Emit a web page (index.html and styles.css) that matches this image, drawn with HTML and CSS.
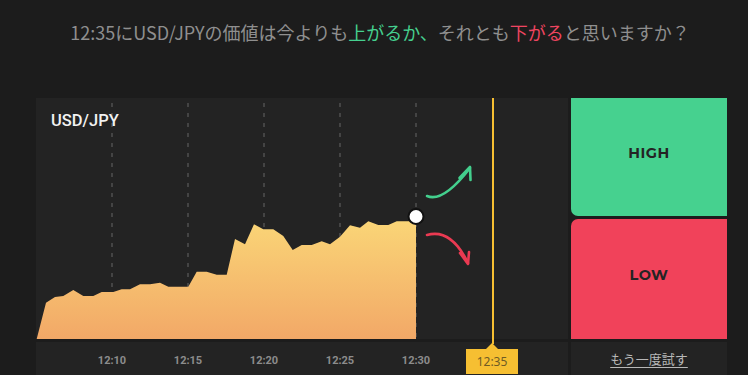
FILE: index.html
```html
<!DOCTYPE html>
<html lang="ja">
<head>
<meta charset="utf-8">
<link rel="stylesheet" href="styles.css">
</head>
<body>
<header class="question">
  <p>12:35にUSD/JPYの価値は今よりも<span class="up">上がるか、</span>それとも<span class="down">下がる</span>と思いますか？</p>
</header>
<main class="board">
  <section class="chart">
    <h2 class="pair">USD/JPY</h2>
    <svg class="plot" width="532" height="241" viewBox="0 0 532 241">
      <defs>
        <linearGradient id="fill" x1="0" y1="0" x2="0" y2="1">
          <stop offset="0" stop-color="#fad677"/>
          <stop offset="1" stop-color="#f2a867"/>
        </linearGradient>
      </defs>
      <g class="grid">
        <line x1="76" y1="5" x2="76" y2="241"/>
        <line x1="152" y1="5" x2="152" y2="241"/>
        <line x1="228" y1="5" x2="228" y2="241"/>
        <line x1="304" y1="5" x2="304" y2="241"/>
        <line x1="380" y1="5" x2="380" y2="241"/>
      </g>
      <path fill="url(#fill)" d="M0.7 241 L10 204.7 L19 199 L27.3 198 L37.3 192 L47.3 198 L57.3 198 L65.7 194 L77.3 194 L85.7 191.3 L94 191.3 L104 186.3 L114 186.3 L124 184.7 L132.3 188.7 L152.3 188.7 L160.7 173.7 L170.7 173.7 L180.7 176.7 L190.7 176.7 L199 141 L209 146.3 L218 126.3 L227.3 131.3 L237.3 131.3 L247.3 138 L256.7 152 L265.7 147 L275.7 147 L285.7 143.3 L294 146.3 L304 138.7 L314 127.3 L324 129.7 L332.3 123.3 L342.3 127 L352.3 127 L360.7 123.3 L374 123.3 L380 120.3 L380 241 Z"/>
      <g fill="none" stroke-width="2.6" stroke-linecap="round" stroke-linejoin="round">
        <path stroke="#43cf8d" d="M391 98 Q407 105 434 70"/>
        <path stroke="#43cf8d" d="M423.5 80 L434 69 L434.5 82"/>
        <path stroke="#ea3a52" d="M391 137 Q415 130 432 165"/>
        <path stroke="#ea3a52" d="M424 155 L432 166 L433 154"/>
      </g>
      <circle cx="380" cy="118.5" r="7.5" fill="#fff" stroke="#111" stroke-width="2"/>
    </svg>
  </section>
  <section class="actions">
    <button class="btn high">HIGH</button>
    <button class="btn low">LOW</button>
  </section>
  <div class="axis">
    <span class="tick" style="left:76px">12:10</span>
    <span class="tick" style="left:152px">12:15</span>
    <span class="tick" style="left:228px">12:20</span>
    <span class="tick" style="left:304px">12:25</span>
    <span class="tick" style="left:380px">12:30</span>
    <span class="expiry-tag">12:35</span>
  </div>
  <div class="retry"><a href="#">もう一度試す</a></div>
  <div class="expiry-line"></div>
</main>
</body>
</html>
```

FILE: styles.css
```css
html, body {
  margin: 0;
  padding: 0;
  background: #1c1c1c;
  width: 748px;
  height: 375px;
  overflow: hidden;
  font-family: "Noto Sans CJK JP", "Noto Sans", sans-serif;
}

.question {
  height: 98px;
  box-sizing: border-box;
  padding: 19px 0 0 12px;
  text-align: center;
}

.question p {
  margin: 0;
  font-size: 18px;
  line-height: 26px;
  color: #8f8f8f;
  letter-spacing: 0;
}

.up { color: #45d08f; }
.down { color: #ef4560; }

.board {
  position: relative;
  display: grid;
  grid-template-columns: 532px 156px;
  grid-template-rows: 241px 33px;
  gap: 3px;
  margin-left: 36px;
  width: 691px;
}

.chart {
  position: relative;
  background: #232323;
}

.pair {
  position: absolute;
  left: 15px;
  top: 13px;
  margin: 0;
  font-family: Roboto, "Noto Sans", sans-serif;
  font-weight: 500;
  font-size: 16.5px;
  color: #f2f2f2;
  letter-spacing: 0;
}

.plot { display: block; }

.grid line {
  stroke: #666;
  stroke-width: 1;
  stroke-dasharray: 4 6;
}

.actions {
  display: grid;
  grid-template-rows: 118px 120px;
  gap: 3px;
}

.btn {
  border: 0;
  margin: 0;
  padding: 0 0 9px;
  font-family: Montserrat, Lato, "Noto Sans", sans-serif;
  font-weight: 700;
  font-size: 14.5px;
  letter-spacing: 0.5px;
  color: #242424;
  cursor: pointer;
}

.high {
  background: #46d18f;
  border-bottom-left-radius: 7px;
}

.low {
  background: #f1425a;
  border-top-left-radius: 7px;
}

.axis {
  position: relative;
  background: #232323;
}

.tick {
  position: absolute;
  top: 12px;
  transform: translateX(-50%);
  font-family: Roboto, "Noto Sans", sans-serif;
  font-weight: 700;
  font-size: 11px;
  color: #8c8c8c;
}

.expiry-tag {
  position: absolute;
  left: 430px;
  top: 7px;
  width: 52px;
  height: 25px;
  box-sizing: border-box;
  background: #f6bf32;
  color: #6f5b24;
  font-family: "Noto Sans", sans-serif;
  font-size: 12px;
  line-height: 25px;
  text-align: center;
}

.expiry-tag::before {
  content: "";
  position: absolute;
  left: 20px;
  top: -6px;
  border-left: 6px solid transparent;
  border-right: 6px solid transparent;
  border-bottom: 6px solid #f6bf32;
}

.retry {
  background: #232323;
  display: flex;
  justify-content: center;
  align-items: center;
}

.retry a {
  font-size: 13px;
  color: #b8b8b8;
  text-decoration: underline;
  text-underline-offset: 3px;
  padding-bottom: 1px;
}

.expiry-line {
  position: absolute;
  left: 456px;
  top: 0;
  width: 2px;
  height: 246px;
  background: #f6bf32;
}
```
